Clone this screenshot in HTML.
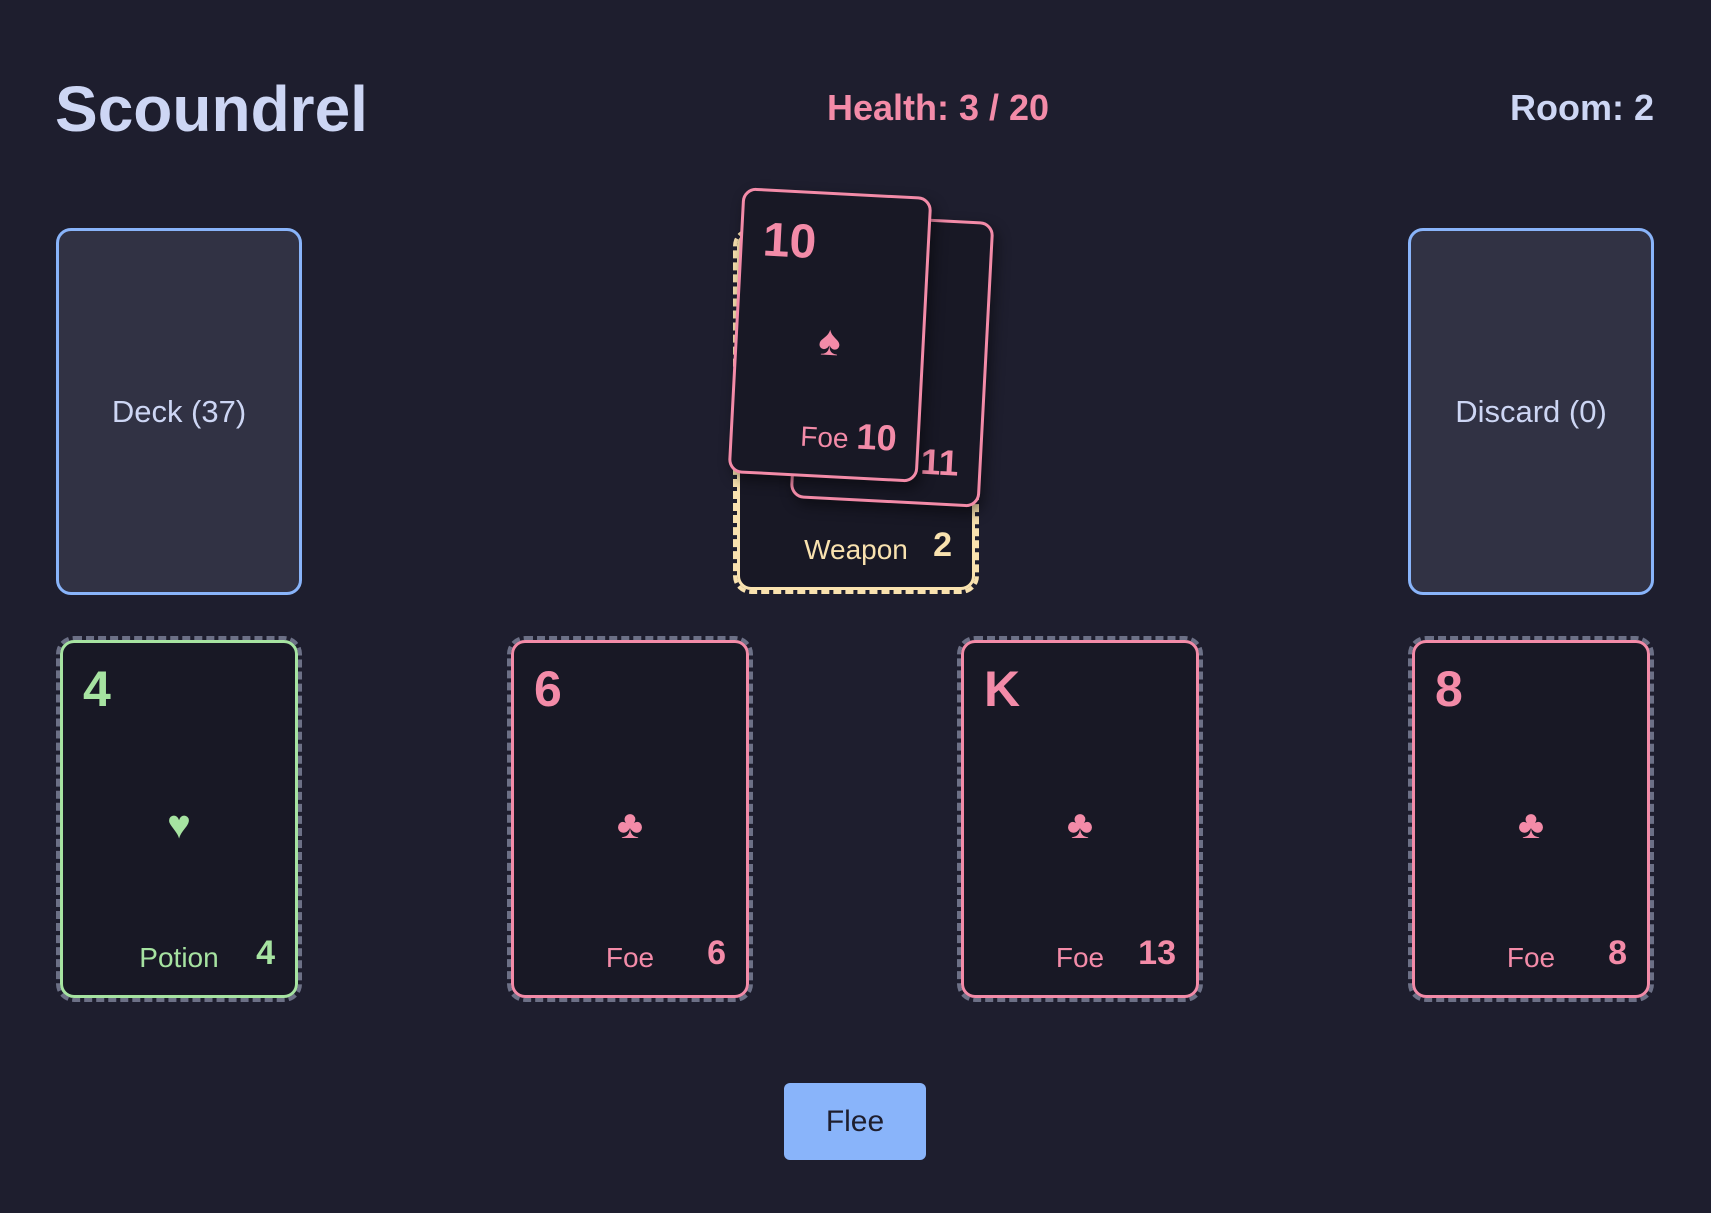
<!DOCTYPE html>
<html><head><meta charset="utf-8"><style>
*{box-sizing:border-box;margin:0;padding:0}
body{width:1711px;height:1213px;background:#1e1e2e;font-family:"Liberation Sans",sans-serif;position:relative;overflow:hidden;color:#cdd6f4}
.h{position:absolute;font-weight:bold}
.pile{position:absolute;top:228px;width:246px;height:367px;border:3px solid #89b4fa;border-radius:15px;background:#313244;display:flex;align-items:center;justify-content:center;font-size:31px;color:#cdd6f4}
.card{position:absolute;width:238px;height:358px;border:3px solid;border-radius:14px;background:#181825}
.room{outline:4px dashed #6c7086;outline-offset:0px}
.rank{position:absolute;left:20px;top:21px;font-size:50px;font-weight:bold;line-height:1}
.suit{position:absolute;left:0;right:0;top:162px;text-align:center;font-size:40px;line-height:1}
.lab{position:absolute;left:0;right:0;top:301px;text-align:center;font-size:28px;line-height:1}
.num{position:absolute;right:20px;top:293px;font-size:34px;font-weight:bold;line-height:1}
.pink{border-color:#f38ba8;color:#f38ba8}
.green{border-color:#a6e3a1;color:#a6e3a1}
.yel{border-color:#f9e2af;color:#f9e2af;outline:4px dashed #f9e2af;outline-offset:0px}
.sm{width:190px;height:286px;transform:rotate(3deg);box-shadow:4px 6px 14px rgba(0,0,0,.45)}
.sm .rank{left:20px;top:25px;font-size:48px}
.sm .suit{top:125px;font-size:42px}
.sb{position:absolute;right:20px;bottom:22px;display:flex;align-items:baseline;gap:8px;line-height:1}
.sb span:first-child{font-size:28px}
.sb span:last-child{font-size:36px;font-weight:bold}
.btn{position:absolute;left:784px;top:1083px;width:142px;height:77px;background:#89b4fa;border-radius:6px;color:#1e1e2e;font-size:30px;display:flex;align-items:center;justify-content:center}
</style></head><body>
<div class="h" style="left:55px;top:72px;font-size:64px">Scoundrel</div>
<div class="h" style="left:738px;width:400px;text-align:center;top:87px;font-size:36px;color:#f38ba8">Health: 3 / 20</div>
<div class="h" style="right:57px;top:87px;font-size:36px">Room: 2</div>

<div class="pile" style="left:56px">Deck (37)</div>
<div class="pile" style="left:1408px">Discard (0)</div>

<div class="card yel" style="left:737px;top:232px"><div class="lab">Weapon</div><div class="num">2</div></div>
<div class="card pink sm" style="left:797px;top:217px"><div class="rank">J</div><div class="suit">♠</div><div class="sb"><span>Foe</span><span>11</span></div></div>
<div class="card pink sm" style="left:735px;top:192px"><div class="rank">10</div><div class="suit">♠</div><div class="sb"><span>Foe</span><span>10</span></div></div>

<div class="card room green" style="left:60px;top:640px"><div class="rank">4</div><div class="suit">♥</div><div class="lab">Potion</div><div class="num">4</div></div>
<div class="card room pink" style="left:511px;top:640px"><div class="rank">6</div><div class="suit">♣</div><div class="lab">Foe</div><div class="num">6</div></div>
<div class="card room pink" style="left:961px;top:640px"><div class="rank">K</div><div class="suit">♣</div><div class="lab">Foe</div><div class="num">13</div></div>
<div class="card room pink" style="left:1412px;top:640px"><div class="rank">8</div><div class="suit">♣</div><div class="lab">Foe</div><div class="num">8</div></div>

<div class="btn">Flee</div>
</body></html>
